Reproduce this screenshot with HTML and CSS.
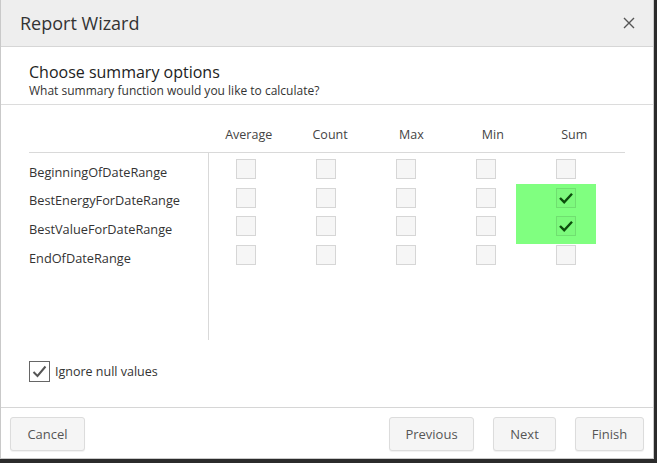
FILE: index.html
```html
<!DOCTYPE html>
<html>
<head>
<meta charset="utf-8">
<title>Report Wizard</title>
<link rel="stylesheet" href="styles.css">
</head>
<body>
<div class="dialog">
  <div class="header">
    <div class="title">Report Wizard</div>
    <svg class="close" width="12" height="12" viewBox="0 0 12 12"><path d="M1 1L11 11M11 1L1 11" stroke="#555" stroke-width="1.4" fill="none"/></svg>
  </div>
  <div class="intro">
    <div class="intro-title">Choose summary options</div>
    <div class="intro-sub">What summary function would you like to calculate?</div>
  </div>
  <div class="content">
    <div class="cols">
      <div class="spacer"></div>
      <div class="col-h">Average</div>
      <div class="col-h">Count</div>
      <div class="col-h">Max</div>
      <div class="col-h">Min</div>
      <div class="col-h">Sum</div>
    </div>
    <div class="matrix">
      <div class="hl"></div>

      <div class="label">BeginningOfDateRange</div>
      <div class="cell"><span class="cb"></span></div>
      <div class="cell"><span class="cb"></span></div>
      <div class="cell"><span class="cb"></span></div>
      <div class="cell"><span class="cb"></span></div>
      <div class="cell"><span class="cb"></span></div>

      <div class="label">BestEnergyForDateRange</div>
      <div class="cell"><span class="cb"></span></div>
      <div class="cell"><span class="cb"></span></div>
      <div class="cell"><span class="cb"></span></div>
      <div class="cell"><span class="cb"></span></div>
      <div class="cell"><span class="cb on"><svg width="18" height="18" viewBox="0 0 18 18"><path d="M3 9L7.2 13.2L15 4.8" stroke="#0c4d0c" stroke-width="2.4" fill="none"/></svg></span></div>

      <div class="label">BestValueForDateRange</div>
      <div class="cell"><span class="cb"></span></div>
      <div class="cell"><span class="cb"></span></div>
      <div class="cell"><span class="cb"></span></div>
      <div class="cell"><span class="cb"></span></div>
      <div class="cell"><span class="cb on"><svg width="18" height="18" viewBox="0 0 18 18"><path d="M3 9L7.2 13.2L15 4.8" stroke="#0c4d0c" stroke-width="2.4" fill="none"/></svg></span></div>

      <div class="label">EndOfDateRange</div>
      <div class="cell"><span class="cb"></span></div>
      <div class="cell"><span class="cb"></span></div>
      <div class="cell"><span class="cb"></span></div>
      <div class="cell"><span class="cb"></span></div>
      <div class="cell"><span class="cb"></span></div>

      <div class="fill"></div>
    </div>
    <div class="ignore">
      <span class="cb2"><svg width="19" height="19" viewBox="0 0 19 19"><path d="M3.5 10L7.5 14L15.5 4.5" stroke="#555" stroke-width="2" fill="none"/></svg></span>
      <span class="ignore-text">Ignore null values</span>
    </div>
  </div>
  <div class="footer">
    <button class="btn cancel">Cancel</button>
    <button class="btn prev">Previous</button>
    <button class="btn next">Next</button>
    <button class="btn finish">Finish</button>
  </div>
</div>
</body>
</html>
```

FILE: styles.css
```css
html, body {
  margin: 0;
  padding: 0;
}
body {
  background: #2b2b2b;
  width: 657px;
  height: 463px;
  overflow: hidden;
  font-family: "Open Sans", "Noto Sans", sans-serif;
  color: #333;
}
.dialog {
  width: 654px;
  height: 459px;
  box-sizing: border-box;
  border: 1px solid #c9c9c9;
  border-top: none;
  background: #fff;
  display: flex;
  flex-direction: column;
}
.header {
  height: 46px;
  flex: none;
  background: #eeeeee;
  border-bottom: 1px solid #d6d6d6;
  display: flex;
  align-items: center;
  justify-content: space-between;
  padding: 0 18px 0 19px;
}
.title {
  font-size: 18px;
  line-height: 24px;
  color: #333;
}
.close {
  display: block;
}
.intro {
  flex: none;
  padding: 15px 28px 5px;
  border-bottom: 1px solid #dcdcdc;
}
.intro-title {
  font-size: 16px;
  line-height: 20px;
  color: #222;
}
.intro-sub {
  font-size: 12px;
  line-height: 16px;
  margin-top: 1px;
  color: #333;
}
.content {
  flex: 1;
  padding: 20px 28px 0;
}
.cols {
  display: grid;
  grid-template-columns: 179px repeat(5, 81.4px);
  height: 19px;
  line-height: 19px;
  padding-bottom: 8px;
  border-bottom: 1px solid #d9d9d9;
  font-size: 12.5px;
  color: #444;
}
.col-h {
  text-align: center;
}
.matrix {
  position: relative;
  display: grid;
  grid-template-columns: 180px 67px repeat(4, 80px);
  grid-template-rows: repeat(4, 28.67px) 1fr;
  height: 187px;
}
.hl {
  position: absolute;
  left: 487px;
  top: 31px;
  width: 80px;
  height: 60px;
  background: #80ff80;
}
.label {
  border-right: 1px solid #d9d9d9;
  font-size: 12.75px;
  color: #333;
  display: flex;
  align-items: center;
  padding-top: 9px;
  box-sizing: border-box;
}
.cell {
  display: flex;
  justify-content: flex-end;
  align-items: flex-start;
  padding: 6px 20px 0 0;
}
.cb {
  position: relative;
  z-index: 1;
  width: 20px;
  height: 20px;
  box-sizing: border-box;
  border: 1px solid rgba(0, 0, 0, 0.13);
  background: rgba(0, 0, 0, 0.035);
  display: flex;
  align-items: center;
  justify-content: center;
}
.cb.on {
  background: rgba(0, 0, 0, 0.02);
  border-color: rgba(0, 0, 0, 0.1);
}
.cb svg {
  display: block;
}
.fill {
  border-right: 1px solid #d9d9d9;
}
.ignore {
  margin-top: 21px;
  display: flex;
  align-items: center;
  gap: 5px;
}
.cb2 {
  width: 21px;
  height: 21px;
  box-sizing: border-box;
  border: 1px solid #666;
  background: #fff;
  display: flex;
  align-items: center;
  justify-content: center;
}
.cb2 svg {
  display: block;
}
.ignore-text {
  font-size: 12.5px;
  color: #333;
}
.footer {
  flex: none;
  height: 51px;
  box-sizing: border-box;
  border-top: 1px solid #d6d6d6;
  display: flex;
  align-items: flex-start;
  gap: 19px;
  padding: 9px 9px 0 9px;
}
.btn {
  height: 34px;
  box-sizing: border-box;
  background: #f5f5f5;
  border: 1px solid #dcdcdc;
  border-radius: 3px;
  box-shadow: 0 1px 1px rgba(0, 0, 0, 0.06);
  font-family: "Open Sans", "Noto Sans", sans-serif;
  font-size: 13px;
  color: #555;
  padding: 0;
}
.cancel { width: 75px; margin-right: auto; }
.prev { width: 85px; }
.next { width: 63px; }
.finish { width: 69px; }
```
